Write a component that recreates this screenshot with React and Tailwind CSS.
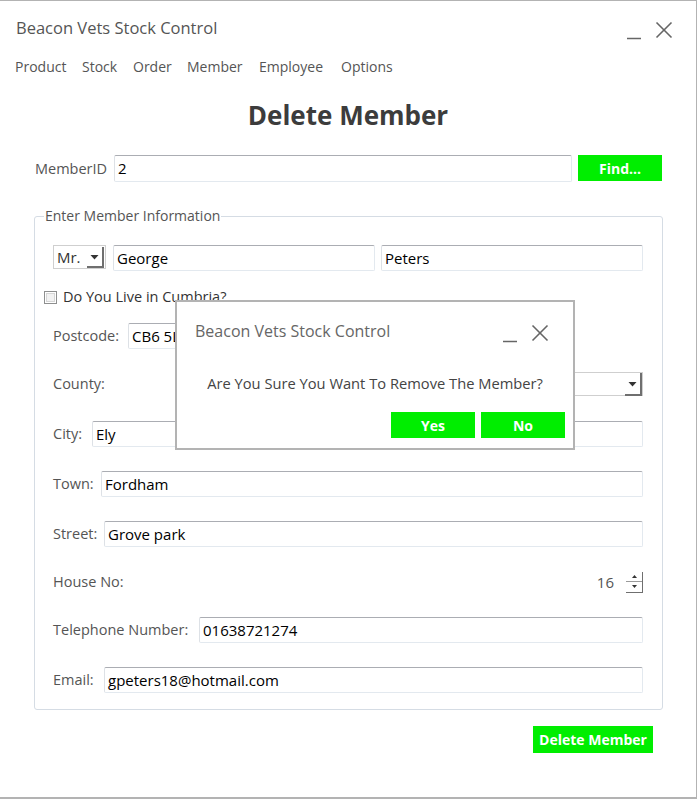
import React from "react";

const Field = ({ className = "", children }) => (
  <div
    className={`h-[26px] flex items-center border border-[#e3e9ef] border-t-[#abadb3] border-l-[#dde1e6] rounded-[2px] pl-[3px] text-[15px] text-black bg-white overflow-hidden whitespace-nowrap ${className}`}
  >
    {children}
  </div>
);

const Label = ({ className = "", children }) => (
  <div className={`text-[14.5px] text-[#555] whitespace-nowrap shrink-0 ${className}`}>{children}</div>
);

const MinIcon = ({ className = "" }) => (
  <svg width="16" height="18" viewBox="0 0 16 18" className={className}>
    <line x1="1" y1="16.5" x2="15" y2="16.5" stroke="#666" strokeWidth="1.5" />
  </svg>
);

const CloseIcon = ({ className = "" }) => (
  <svg width="18" height="18" viewBox="0 0 18 18" className={className}>
    <line x1="1.5" y1="1.5" x2="16.5" y2="16.5" stroke="#666" strokeWidth="1.6" />
    <line x1="16.5" y1="1.5" x2="1.5" y2="16.5" stroke="#666" strokeWidth="1.6" />
  </svg>
);

const DownTri = () => (
  <svg width="9" height="6" viewBox="0 0 9 6">
    <path d="M0.5 1 H8.5 L4.5 5.5 Z" fill="#333" />
  </svg>
);

const GreenButton = ({ className = "", children }) => (
  <div
    className={`bg-[#00ee00] text-white font-bold text-[14px] flex items-center justify-center ${className}`}
  >
    {children}
  </div>
);

export default function App() {
  return (
    <div className="relative w-[697px] h-[799px] bg-white border-t border-r border-b-2 border-[#b3b3b3] font-['Open_Sans',sans-serif] flex flex-col overflow-hidden">
      {/* Title bar */}
      <div className="h-[54px] flex items-center justify-between pl-[16px] pr-[23px]">
        <div className="text-[16.5px] text-[#555]">Beacon Vets Stock Control</div>
        <div className="flex items-center gap-[13px] mt-[3px]">
          <MinIcon className="mt-[2px]" />
          <CloseIcon />
        </div>
      </div>

      {/* Menu */}
      <div className="h-[22px] flex items-center pl-[15px] text-[14px] text-[#555]">
        <div className="w-[67px]">Product</div>
        <div className="w-[51px]">Stock</div>
        <div className="w-[54px]">Order</div>
        <div className="w-[72px]">Member</div>
        <div className="w-[82px]">Employee</div>
        <div>Options</div>
      </div>

      {/* Heading */}
      <div className="mt-[18px] h-[40px] flex items-center justify-center text-[26px] font-bold text-[#3c3c3c]">
        Delete Member
      </div>

      {/* MemberID row */}
      <div className="mt-[20px] h-[27px] flex items-start pl-[35px]">
        <Label className="w-[79px] h-[27px] flex items-center">MemberID</Label>
        <Field className="w-[458px] h-[27px]">2</Field>
        <GreenButton className="ml-[6px] w-[84px] h-[26px]">Find...</GreenButton>
      </div>

      {/* Group box */}
      <fieldset className="mt-[23px] ml-[34px] w-[629px] border border-[#d5dce4] rounded-[3px] pl-[18px] pr-[19px] pb-[16px]">
        <legend className="ml-[-9px] px-[1px] text-[14px] leading-[22px] text-[#555]">
          Enter Member Information
        </legend>

        <div className="flex flex-col">
          {/* Title / names */}
          <div className="mt-[18px] flex items-start">
            <div className="w-[53px] h-[24px] border border-[#cfcfcf] flex items-center relative bg-white">
              <span className="pl-[3px] text-[15px] text-[#333]">Mr.</span>
              <div className="absolute right-[1px] top-[1px] w-[17px] h-[21px] border-r-2 border-b-2 border-[#6f6f6f] flex items-center justify-center">
                <DownTri />
              </div>
            </div>
            <Field className="ml-[7px] w-[262px]">George</Field>
            <Field className="ml-[6px] w-[262px]">Peters</Field>
          </div>

          {/* Checkbox */}
          <div className="mt-[13px] h-[26px] flex items-center ml-[-9px]">
            <div className="w-[13px] h-[13px] border border-[#8e8f8f] bg-white p-[1px]">
              <div className="w-full h-full border border-[#d6d6d6] bg-[#f2f2f2]" />
            </div>
            <div className="ml-[6px] text-[14.5px] text-[#333]">Do You Live in Cumbria?</div>
          </div>

          {/* Postcode */}
          <div className="mt-[13px] h-[26px] flex items-center">
            <Label className="w-[75px]">Postcode:</Label>
            <Field className="w-[142px]">CB6 5LT</Field>
          </div>

          {/* County */}
          <div className="mt-[22px] h-[26px] flex items-center">
            <Label className="w-[250px]">County:</Label>
            <div className="flex-1 h-[24px] border border-[#cfcfcf] relative bg-white">
              <div className="absolute right-[0px] top-[0px] w-[17px] h-[23px] border-r-2 border-b-2 border-[#6f6f6f] flex items-center justify-center">
                <DownTri />
              </div>
            </div>
          </div>

          {/* City */}
          <div className="mt-[24px] h-[26px] flex items-center">
            <Label className="w-[39px]">City:</Label>
            <Field className="flex-1">Ely</Field>
          </div>

          {/* Town */}
          <div className="mt-[24px] h-[26px] flex items-center">
            <Label className="w-[48px]">Town:</Label>
            <Field className="flex-1">Fordham</Field>
          </div>

          {/* Street */}
          <div className="mt-[24px] h-[26px] flex items-center">
            <Label className="w-[51px]">Street:</Label>
            <Field className="flex-1">Grove park</Field>
          </div>

          {/* House No */}
          <div className="mt-[22px] h-[26px] flex items-center justify-between">
            <Label>House No:</Label>
            <div className="flex items-center">
              <span className="text-[15px] text-[#555] mr-[12px]">16</span>
              <div className="w-[17px] h-[21px] flex flex-col border-r border-b border-[#6f6f6f]">
                <div className="h-[10px] border-b border-[#9a9a9a] flex items-center justify-center">
                  <svg width="5" height="3" viewBox="0 0 5 3">
                    <path d="M0 3 L2.5 0 L5 3 Z" fill="#333" />
                  </svg>
                </div>
                <div className="flex-1 flex items-center justify-center">
                  <svg width="5" height="3" viewBox="0 0 5 3">
                    <path d="M0 0 L5 0 L2.5 3 Z" fill="#333" />
                  </svg>
                </div>
              </div>
            </div>
          </div>

          {/* Telephone */}
          <div className="mt-[22px] h-[26px] flex items-center">
            <Label className="w-[146px]">Telephone Number:</Label>
            <Field className="flex-1">01638721274</Field>
          </div>

          {/* Email */}
          <div className="mt-[24px] h-[26px] flex items-center">
            <Label className="w-[51px]">Email:</Label>
            <Field className="flex-1">gpeters18@hotmail.com</Field>
          </div>
        </div>
      </fieldset>

      {/* Delete button */}
      <div className="mt-[16px] flex justify-end pr-[43px]">
        <GreenButton className="w-[120px] h-[27px] text-[14px]">Delete Member</GreenButton>
      </div>

      {/* Dialog */}
      <div className="absolute left-[175px] top-[299px] w-[400px] h-[150px] border-2 border-[#b3b3b3] bg-white flex flex-col">
        <div className="h-[58px] flex items-center justify-between pl-[18px] pr-[24px]">
          <div className="text-[16px] text-[#666]">Beacon Vets Stock Control</div>
          <div className="flex items-center gap-[13px] mt-[4px]">
            <MinIcon className="mt-[2px]" />
            <CloseIcon />
          </div>
        </div>
        <div className="mt-[12px] h-[22px] flex items-center justify-center text-[14.7px] text-[#444]">
          Are You Sure You Want To Remove The Member?
        </div>
        <div className="mt-[18px] flex justify-end gap-[6px] pr-[8px]">
          <GreenButton className="w-[84px] h-[26px]">Yes</GreenButton>
          <GreenButton className="w-[84px] h-[26px]">No</GreenButton>
        </div>
      </div>
    </div>
  );
}
